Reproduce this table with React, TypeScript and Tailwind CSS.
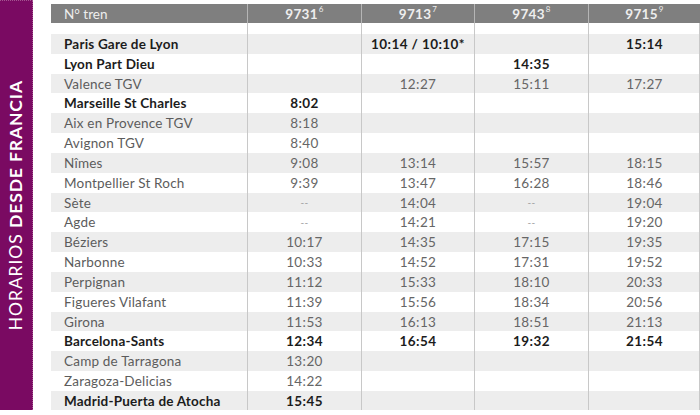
const font = { fontFamily: "Lato, 'Open Sans', sans-serif" };

type Row = { name: string; times: string[]; bold?: boolean };

const rows: Row[] = [
  { name: "Paris Gare de Lyon", times: ["", "10:14 / 10:10*", "", "15:14"], bold: true },
  { name: "Lyon Part Dieu", times: ["", "", "14:35", ""], bold: true },
  { name: "Valence TGV", times: ["", "12:27", "15:11", "17:27"] },
  { name: "Marseille St Charles", times: ["8:02", "", "", ""], bold: true },
  { name: "Aix en Provence TGV", times: ["8:18", "", "", ""] },
  { name: "Avignon TGV", times: ["8:40", "", "", ""] },
  { name: "Nîmes", times: ["9:08", "13:14", "15:57", "18:15"] },
  { name: "Montpellier St Roch", times: ["9:39", "13:47", "16:28", "18:46"] },
  { name: "Sète", times: ["--", "14:04", "--", "19:04"] },
  { name: "Agde", times: ["--", "14:21", "--", "19:20"] },
  { name: "Béziers", times: ["10:17", "14:35", "17:15", "19:35"] },
  { name: "Narbonne", times: ["10:33", "14:52", "17:31", "19:52"] },
  { name: "Perpignan", times: ["11:12", "15:33", "18:10", "20:33"] },
  { name: "Figueres Vilafant", times: ["11:39", "15:56", "18:34", "20:56"] },
  { name: "Girona", times: ["11:53", "16:13", "18:51", "21:13"] },
  { name: "Barcelona-Sants", times: ["12:34", "16:54", "19:32", "21:54"], bold: true },
  { name: "Camp de Tarragona", times: ["13:20", "", "", ""] },
  { name: "Zaragoza-Delicias", times: ["14:22", "", "", ""] },
  { name: "Madrid-Puerta de Atocha", times: ["15:45", "", "", ""], bold: true },
];

const trains = [
  { num: "9731", sup: "6" },
  { num: "9713", sup: "7" },
  { num: "9743", sup: "8" },
  { num: "9715", sup: "9" },
];

const cols = "grid grid-cols-[196px_114px_113px_114px_112px]";

export default function App() {
  return (
    <div className="w-[700px] h-[415px] bg-white flex overflow-hidden" style={font}>
      {/* side label */}
      <div className="w-[33px] h-[410px] shrink-0 bg-[#7a0a62] border-t border-r border-dotted border-[#a45590] flex items-center justify-center">
        <div className="[writing-mode:vertical-rl] rotate-180 text-white text-[17.5px] tracking-[0.9px] whitespace-nowrap leading-none">
          <span>HORARIOS</span>{" "}
          <span className="font-bold">DESDE FRANCIA</span>
        </div>
      </div>

      {/* table */}
      <div className="ml-[18px] pt-[4px] w-[649px] h-[410px] overflow-hidden">
        <div className={`${cols} h-[19px] bg-[#7f7f7f] text-[#eeeeee] text-[13.5px]`}>
          <div className="pl-[13px] flex items-center">N° tren</div>
          {trains.map((t) => (
            <div key={t.num} className="border-l border-[#b5b5b5] flex items-center justify-center font-bold tracking-[0.3px]">
              {t.num}
              <sup className="text-[8px] font-normal ml-[1px] -top-[5px]">{t.sup}</sup>
            </div>
          ))}
        </div>
        <div className={`${cols} h-[11px] border-r border-[#c8c8c8]`}>
          <div />
          <div className="border-l border-[#c8c8c8]" />
          <div className="border-l border-[#c8c8c8]" />
          <div className="border-l border-[#c8c8c8]" />
          <div className="border-l border-[#c8c8c8]" />
        </div>
        {rows.map((r, i) => (
          <div
            key={r.name}
            className={`${cols} h-[19.84px] text-[13.5px] border-r border-[#c8c8c8] ${i % 2 === 0 ? "bg-[#ededed]" : "bg-white"}`}
          >
            <div className={`pl-[13px] flex items-center tracking-[0.2px] ${r.bold ? "font-bold text-[#1c1c1c]" : "text-[#5c5c5c]"}`}>
              {r.name}
            </div>
            {r.times.map((t, j) => (
              <div
                key={j}
                className={`border-l border-[#c8c8c8] flex items-center justify-center tracking-[0.4px] ${
                  t === "--"
                    ? "text-[#9a9a9a] text-[10px]"
                    : r.bold
                    ? "font-bold text-[#1c1c1c]"
                    : "text-[#666666]"
                }`}
              >
                {t}
              </div>
            ))}
          </div>
        ))}
      </div>
    </div>
  );
}
